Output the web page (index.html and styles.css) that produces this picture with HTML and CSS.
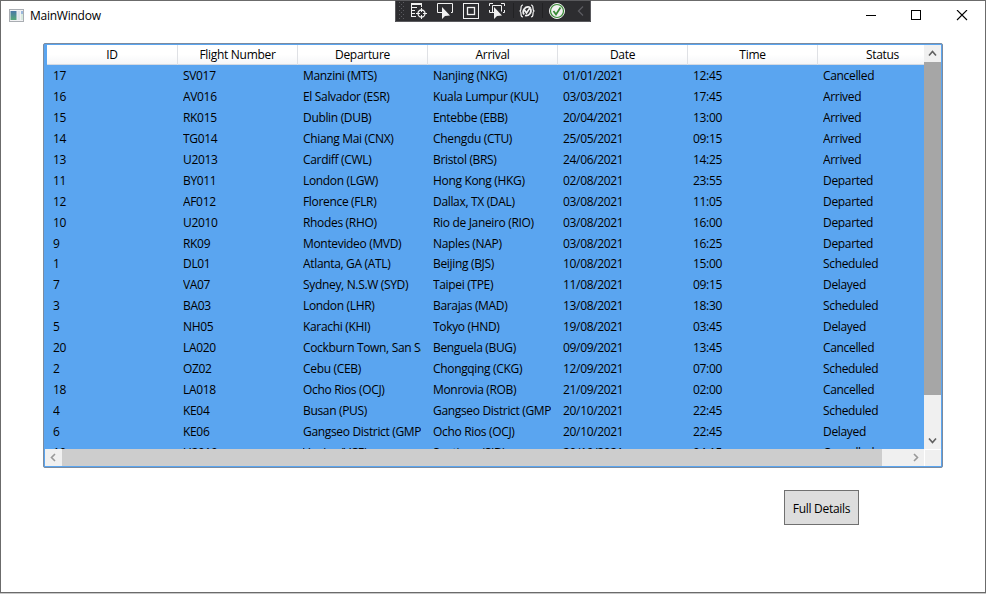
FILE: index.html
```html
<!DOCTYPE html>
<html lang="en">
<head>
<meta charset="utf-8">
<title>MainWindow</title>
<link rel="stylesheet" href="styles.css">
</head>
<body>
<div class="window">
  <header class="titlebar">
    <svg class="app-icon" width="15" height="13" viewBox="0 0 15 13"><defs><linearGradient id="pane" x2="0" y2="1"><stop stop-color="#4a78a8"/><stop offset="1" stop-color="#58a878"/></linearGradient></defs><rect x=".5" y=".5" width="14" height="12" fill="#f2f2f4" stroke="#a9adb2"/><rect x="1.5" y="2" width="6" height="9" fill="url(#pane)"/><rect x="8.500" y="2" width="2.500" height="9" fill="#dfe4ea"/><rect x="12" y="2" width="2" height="3" fill="#9bb9dc"/><rect x="12" y="5" width="2" height="6" fill="#d7eadf"/></svg>
    <span class="title">MainWindow</span>
    <svg class="controls" width="102" height="12" viewBox="0 0 102 12" fill="none" stroke="#000"><path d="M0 5.500h10"/><rect x="45.500" y=".5" width="9" height="9"/><path d="M91 0l10 10M101 0L91 10" stroke-width="1.100"/></svg>
  </header>
  <div class="debugbar">
    <svg width="196" height="22" viewBox="0 0 196 22" fill="none" stroke="#f1f1f1">
      <rect width="196" height="22" fill="#2d2d30" stroke="none"/>
      <path d="M4.500 2v17M8.500 2v17" stroke="#5b5b60" stroke-dasharray="1 3"/><path d="M6.500 4v15" stroke="#5b5b60" stroke-dasharray="1 3"/>
      <path d="M16 4h10M16.500 3.500v13M16 7.500h6M16 10.500h4M16 13.500h4M16 16.500h5M26.500 4v3"/><path d="M16 4h11" stroke-width="2"/>
      <circle cx="26.500" cy="13.500" r="3.500" stroke-width="1.300"/><path d="M26.500 8v4M26.500 15v4M21 13.500h4M28 13.500h4"/>
      <path d="M50 12.500h-7.500v-9h15v9H56" /><path d="M46 7v12l3-3 5-.5z" transform="translate(1 0)" fill="#f1f1f1" stroke="none"/>
      <rect x="68.500" y="3.500" width="15" height="15"/><rect x="72.500" y="7.500" width="7" height="7" stroke-width="1.300"/>
      <path d="M94.500 6V3.500H98M106 3.500h3.500V6M94.500 10v2.500H98M109.500 10v2.500H108M99 12.500h-1.500v-7h9v6"/><path d="M99 7v12l3-3 5-.5z" fill="#f1f1f1" stroke="none"/>
      <path d="M118.500 3v15M147.500 3v15" stroke="#222224"/>
      <path d="M128 5q-2 0-2 3 0 3-1.500 3 1.500 0 1.500 3 0 3 2 3M136 5q2 0 2 3 0 3 1.500 3-1.500 0-1.500 3 0 3-2 3" stroke-width="1.200"/><path d="M134.500 7A5 5 0 0 0 129 14.500M135.500 8.500A5 5 0 0 1 130 15.500M129.500 10l2 3 4-6" stroke-width="1.700"/>
      <circle cx="162" cy="11" r="7.500" fill="#f1f1f1"/><circle cx="162" cy="11" r="6.500" stroke="#388a34" stroke-width="1.200"/><path d="M158.500 11l2.500 3.500 4.500-7" stroke="#388a34" stroke-width="1.800"/>
      <path d="M188 6.500l-4.500 4.500 4.500 4.500" stroke="#5b5b60" stroke-width="1.300"/>
      <path d="M.5 0v21.500h195V0" stroke="#5a5a5e"/><path d="M0 .5h196" stroke="#59595c"/>
    </svg>
  </div>
  <main class="list">
    <div class="view">
      <div class="row head"><b>ID</b><b>Flight Number</b><b>Departure</b><b>Arrival</b><b>Date</b><b>Time</b><b>Status</b></div>
      <div class="rows">
        <div class="row"><span>17</span><span>SV017</span><span>Manzini (MTS)</span><span>Nanjing (NKG)</span><span>01/01/2021</span><span>12:45</span><span>Cancelled</span></div>
        <div class="row"><span>16</span><span>AV016</span><span>El Salvador (ESR)</span><span>Kuala Lumpur (KUL)</span><span>03/03/2021</span><span>17:45</span><span>Arrived</span></div>
        <div class="row"><span>15</span><span>RK015</span><span>Dublin (DUB)</span><span>Entebbe (EBB)</span><span>20/04/2021</span><span>13:00</span><span>Arrived</span></div>
        <div class="row"><span>14</span><span>TG014</span><span>Chiang Mai (CNX)</span><span>Chengdu (CTU)</span><span>25/05/2021</span><span>09:15</span><span>Arrived</span></div>
        <div class="row"><span>13</span><span>U2013</span><span>Cardiff (CWL)</span><span>Bristol (BRS)</span><span>24/06/2021</span><span>14:25</span><span>Arrived</span></div>
        <div class="row"><span>11</span><span>BY011</span><span>London (LGW)</span><span>Hong Kong (HKG)</span><span>02/08/2021</span><span>23:55</span><span>Departed</span></div>
        <div class="row"><span>12</span><span>AF012</span><span>Florence (FLR)</span><span>Dallax, TX (DAL)</span><span>03/08/2021</span><span>11:05</span><span>Departed</span></div>
        <div class="row"><span>10</span><span>U2010</span><span>Rhodes (RHO)</span><span>Rio de Janeiro (RIO)</span><span>03/08/2021</span><span>16:00</span><span>Departed</span></div>
        <div class="row"><span>9</span><span>RK09</span><span>Montevideo (MVD)</span><span>Naples (NAP)</span><span>03/08/2021</span><span>16:25</span><span>Departed</span></div>
        <div class="row"><span>1</span><span>DL01</span><span>Atlanta, GA (ATL)</span><span>Beijing (BJS)</span><span>10/08/2021</span><span>15:00</span><span>Scheduled</span></div>
        <div class="row"><span>7</span><span>VA07</span><span>Sydney, N.S.W (SYD)</span><span>Taipei (TPE)</span><span>11/08/2021</span><span>09:15</span><span>Delayed</span></div>
        <div class="row"><span>3</span><span>BA03</span><span>London (LHR)</span><span>Barajas (MAD)</span><span>13/08/2021</span><span>18:30</span><span>Scheduled</span></div>
        <div class="row"><span>5</span><span>NH05</span><span>Karachi (KHI)</span><span>Tokyo (HND)</span><span>19/08/2021</span><span>03:45</span><span>Delayed</span></div>
        <div class="row"><span>20</span><span>LA020</span><span>Cockburn Town, San Sa</span><span>Benguela (BUG)</span><span>09/09/2021</span><span>13:45</span><span>Cancelled</span></div>
        <div class="row"><span>2</span><span>OZ02</span><span>Cebu (CEB)</span><span>Chongqing (CKG)</span><span>12/09/2021</span><span>07:00</span><span>Scheduled</span></div>
        <div class="row"><span>18</span><span>LA018</span><span>Ocho Rios (OCJ)</span><span>Monrovia (ROB)</span><span>21/09/2021</span><span>02:00</span><span>Cancelled</span></div>
        <div class="row"><span>4</span><span>KE04</span><span>Busan (PUS)</span><span>Gangseo District (GMP)</span><span>20/10/2021</span><span>22:45</span><span>Scheduled</span></div>
        <div class="row"><span>6</span><span>KE06</span><span>Gangseo District (GMP)</span><span>Ocho Rios (OCJ)</span><span>20/10/2021</span><span>22:45</span><span>Delayed</span></div>
        <div class="row"><span>19</span><span>U2019</span><span>Venice (VCE)</span><span>Santiago (SID)</span><span>20/10/2021</span><span>04:15</span><span>Cancelled</span></div>
      </div>
    </div>
    <div class="vbar">
      <svg width="17" height="17" viewBox="0 0 17 17"><path d="M5 10.500l3.500-4 3.500 4"/></svg>
      <div class="vthumb"></div>
      <svg width="17" height="17" viewBox="0 0 17 17"><path d="M5 6.500l3.500 4 3.500-4"/></svg>
    </div>
    <div class="hbar">
      <svg width="17" height="17" viewBox="0 0 17 17"><path d="M10 5L6.500 8.500 10 12"/></svg>
      <div class="hthumb"></div>
      <svg width="17" height="17" viewBox="0 0 17 17"><path d="M7 5l3.500 3.500L7 12"/></svg>
    </div>
    <div class="corner"></div>
  </main>
  <button class="details">Full Details</button>
</div>
</body>
</html>
```
FILE: styles.css
```css
* { box-sizing: border-box; }
body {
  margin: 0;
  background: #c8c8c8;
  font: 12px/16px "Open Sans", "Noto Sans", sans-serif;
  color: #000;
  overflow: hidden;
}
.window {
  position: relative;
  display: flex;
  flex-direction: column;
  width: 986px;
  height: 593px;
  background: #fff;
  border: 1px solid #6b6b6b;
}
.titlebar {
  display: flex;
  align-items: center;
  height: 42px;
  padding: 0 17px 13px 8px;
}
.title { margin-left: 6px; flex: 1; font-size: 12px; letter-spacing: -0.25px; }
.controls { margin-top: 1px; }
.debugbar { position: absolute; left: 394px; top: -1px; height: 22px; }
.debugbar svg { display: block; }
.list {
  display: grid;
  grid-template-columns: 879px 17px;
  grid-template-rows: 404px 17px;
  width: 900px;
  height: 425px;
  margin-left: 42px;
  padding: 1px;
  background: #5aa5f0;
  border: 1px solid #7b8ba0;
  border-radius: 2px;
}
.view { overflow: hidden; padding-left: 2px; }
.row {
  display: grid;
  grid-template-columns: 130px 120px repeat(5, 130px);
  height: 20.96px;
}
.row span {
  margin: 0 6px;
  overflow: hidden;
  white-space: nowrap;
  line-height: 21px;
  font-size: 12px;
  letter-spacing: -0.33px;
}
.head {
  height: 20px;
  background: linear-gradient(#fff 50%, #f5f6f8);
  border-bottom: 1px solid #d5dae2;
}
.head b {
  font-weight: 400;
  font-size: 12px;
  letter-spacing: -0.3px;
  line-height: 20px;
  text-align: center;
}
.head b + b { border-left: 1px solid #dfe1e5; }
.rows { margin-top: -0.1px; }
.vbar, .hbar { display: flex; background: #f0f0f0; }
.vbar { flex-direction: column; justify-content: space-between; }
.vbar svg, .hbar svg { flex: none; fill: none; stroke: #606060; stroke-width: 1.6; }
.hbar svg { stroke: #999; }
.vthumb { height: 333px; margin-bottom: 37px; background: #a6a6a6; }
.hthumb { width: 820px; margin-right: 25px; background: #cdcdcd; }
.corner { background: #f0f0f0; border-top: 1px solid #fff; border-left: 1px solid #fff; }
.details {
  width: 75px;
  height: 35px;
  margin: 22px 0 0 783px;
  padding: 2px 0 0;
  background: #ddd;
  border: 1px solid #707070;
  color: #000;
  font: 12px "Open Sans", sans-serif;
  letter-spacing: -0.3px;
}
```
